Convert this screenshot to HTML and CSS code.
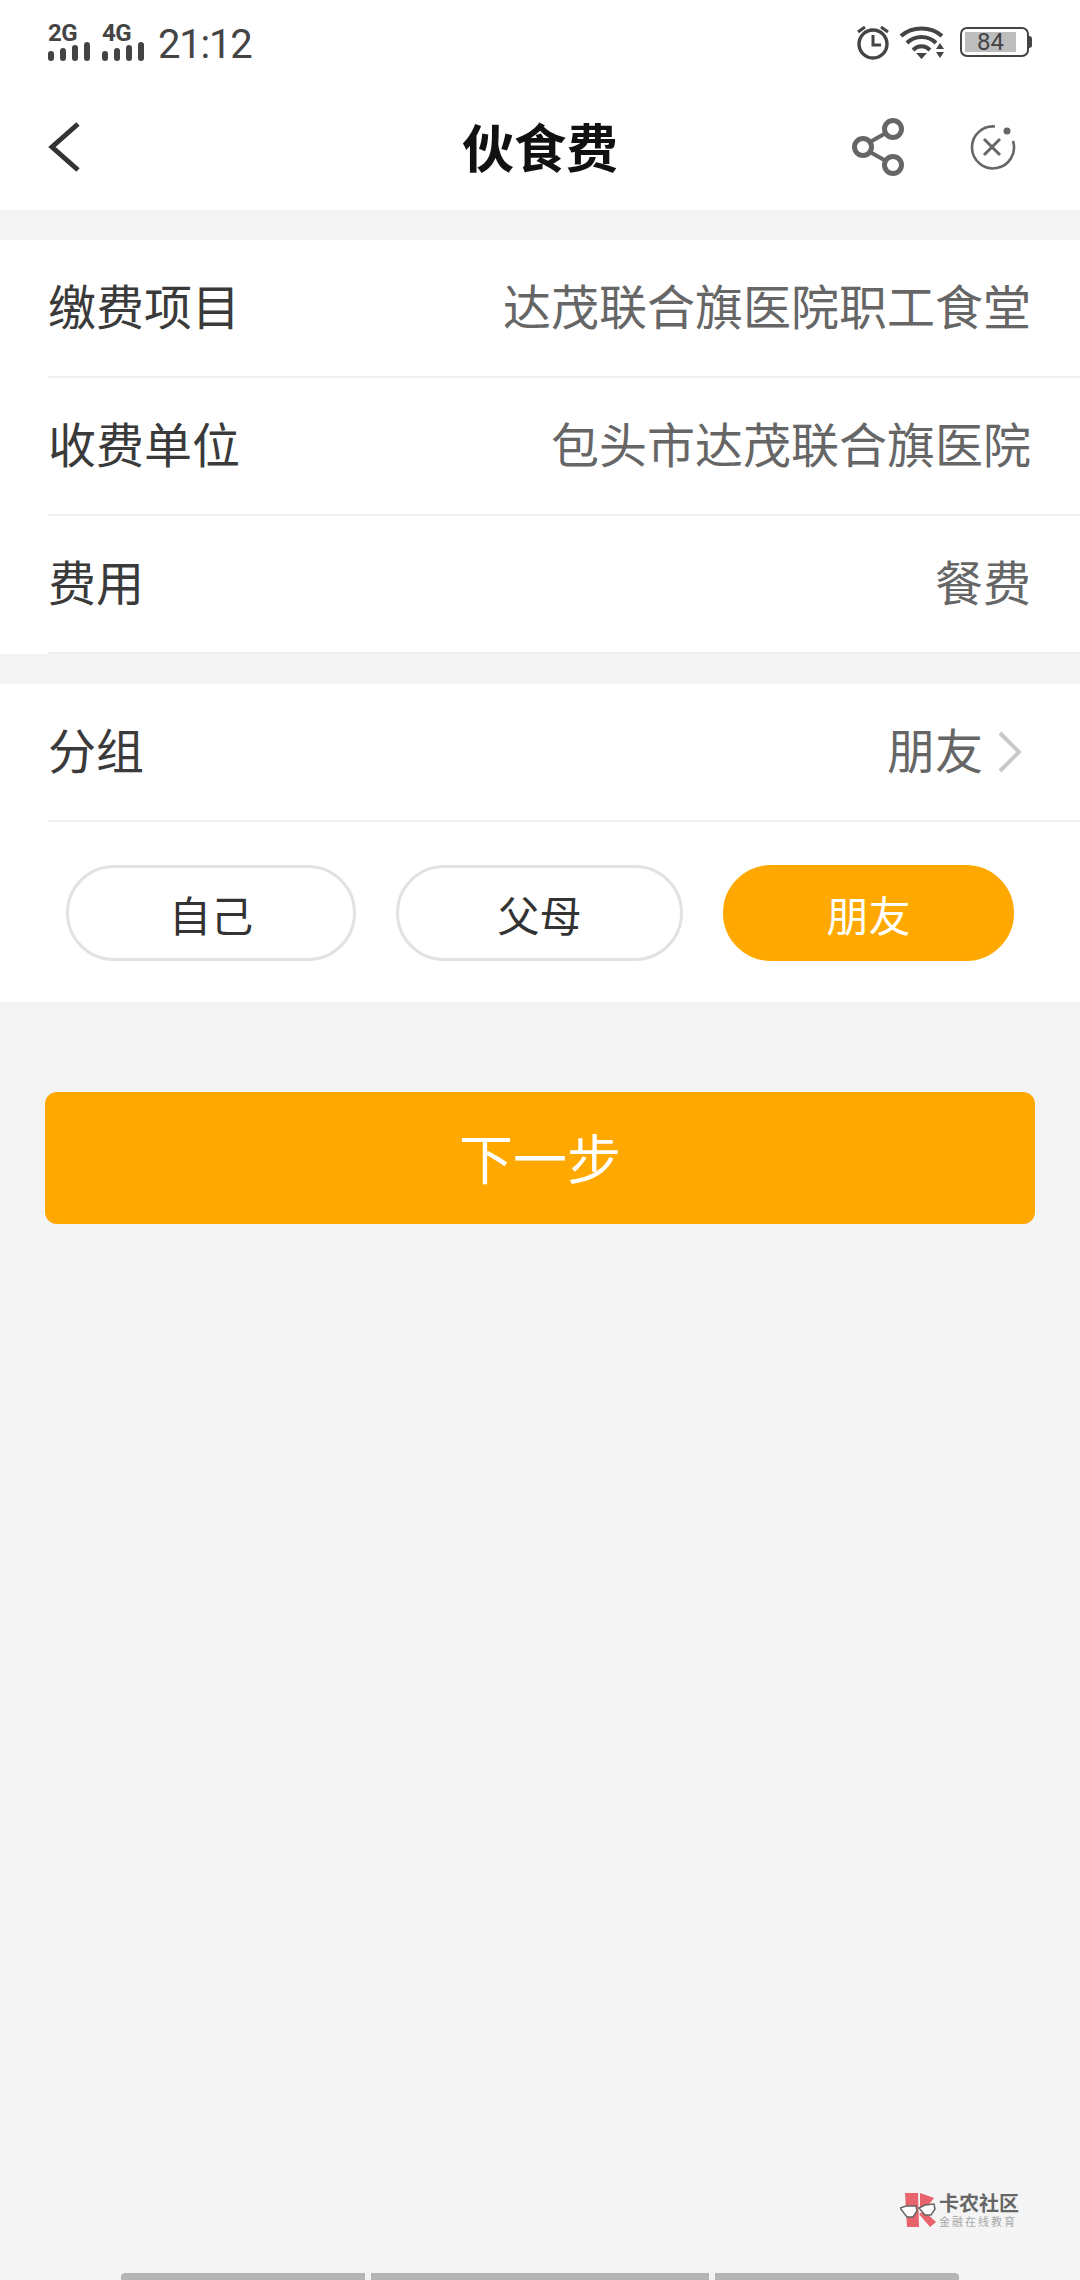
FILE: index.html

```html
<!DOCTYPE html>
<html>
<head>
    <title>伙食费</title>
    <meta charset="utf-8">
    <meta name="viewport" content="width=device-width, initial-scale=1">
    <link rel="stylesheet" href="styles.css">
</head>
<body>
    <div class="status-bar">
        <div class="status-left">
            <div class="signal">
                <span class="signal-name">2G</span>
                <div class="signal-bars"><i class="b1"></i><i class="b2"></i><i class="b3"></i><i class="b4"></i></div>
            </div>
            <div class="signal">
                <span class="signal-name">4G</span>
                <div class="signal-bars"><i class="b1"></i><i class="b2"></i><i class="b3"></i><i class="b4"></i></div>
            </div>
            <span class="clock">21:12</span>
        </div>
        <div class="status-right">
            <svg class="alarm-icon" width="34" height="36" viewBox="0 0 34 36">
                <circle cx="17" cy="20" r="14" fill="none" stroke="#444" stroke-width="3.4"/>
                <path d="M17 11v10h8" fill="none" stroke="#444" stroke-width="3"/>
                <path d="M2 8l7-5M32 8l-7-5" fill="none" stroke="#444" stroke-width="3"/>
            </svg>
            <svg class="wifi-icon" width="48" height="34" viewBox="0 0 48 34">
                <path d="M2 11C13 1 32 1 43 11" fill="none" stroke="#444" stroke-width="4"/>
                <path d="M8 18C16 10 29 10 37 18" fill="none" stroke="#444" stroke-width="4"/>
                <path d="M14 25C19 20 26 20 31 25" fill="none" stroke="#444" stroke-width="4"/>
                <path d="M17 28h11l-5.500 6z" fill="#444"/>
                <path d="M37 24l4-6 4 6zM37 27h8l-4 6z" fill="#444"/>
            </svg>
            <div class="battery">
                <div class="battery-body"><span class="battery-level">84</span></div>
                <div class="battery-tip"></div>
            </div>
        </div>
    </div>

    <div class="nav-bar">
        <svg class="back-icon" width="34" height="50" viewBox="0 0 34 50">
            <path d="M31 2L5 25l26 23" fill="none" stroke="#333" stroke-width="5"/>
        </svg>
        <h1>伙食费</h1>
        <div class="nav-actions">
            <svg width="54" height="60" viewBox="0 0 54 60">
                <circle cx="41" cy="12" r="8.500" fill="none" stroke="#666" stroke-width="5"/>
                <circle cx="11" cy="30" r="8.500" fill="none" stroke="#666" stroke-width="5"/>
                <circle cx="41" cy="48" r="8.500" fill="none" stroke="#666" stroke-width="5"/>
                <path d="M18 25l16-9M18 35l16 9" fill="none" stroke="#666" stroke-width="4"/>
            </svg>
            <svg width="46" height="46" viewBox="0 0 46 46">
                <path d="M25 2.500A21 21 0 1 0 43 17" fill="none" stroke="#666" stroke-width="2.600"/>
                <path d="M14 15l16 16M30 15L14 31" fill="none" stroke="#666" stroke-width="3"/>
                <circle cx="37" cy="7" r="3.500" fill="#666"/>
            </svg>
        </div>
    </div>

    <div class="section">
        <div class="row"><span class="row-label">缴费项目</span><span class="row-value">达茂联合旗医院职工食堂</span></div>
        <div class="row"><span class="row-label">收费单位</span><span class="row-value">包头市达茂联合旗医院</span></div>
        <div class="row"><span class="row-label">费用</span><span class="row-value">餐费</span></div>
    </div>

    <div class="section section-group">
        <div class="row row-group">
            <span class="row-label">分组</span>
            <span class="row-value">朋友</span>
            <svg class="more-icon" width="26" height="42" viewBox="0 0 26 42">
                <path d="M3 2l19 19L3 40" fill="none" stroke="#c8c8c8" stroke-width="4"/>
            </svg>
        </div>
        <div class="chips">
            <div class="chip">自己</div>
            <div class="chip">父母</div>
            <div class="chip chip-active">朋友</div>
        </div>
    </div>

    <button class="next-btn">下一步</button>

    <div class="watermark">
        <svg width="36" height="36" viewBox="0 0 36 36">
            <path d="M5 1h13l1 34H7z" fill="#e8636b"/>
            <path d="M20 1l14 5-10 13-4-3zM19 22l5-3 12 11-6 5z" fill="#e8636b"/>
            <path d="M0 16l6-2h10l1 5-4 6H7z" fill="#fff" stroke="#666" stroke-width="1.500"/>
            <path d="M19 16l6-3 9-1 1 5-4 6h-6z" fill="#fff" stroke="#666" stroke-width="1.500"/>
        </svg>
        <div class="watermark-text">
            <div class="watermark-name">卡农社区</div>
            <div class="watermark-sub">金融在线教育</div>
        </div>
    </div>

    <div class="gesture-bar">
        <div class="gesture-side gesture-left"></div>
        <div class="gesture-mid"></div>
        <div class="gesture-side gesture-right"></div>
    </div>
</body>
</html>
```

FILE: styles.css

```css
* {
    box-sizing: border-box;
}
body {
    font-family: "Noto Sans CJK SC", "Noto Sans", sans-serif;
    margin: 0;
    width: 1080px;
    height: 2280px;
    overflow: hidden;
    position: relative;
    background: #f4f4f4;
    color: #333;
    display: flex;
    flex-direction: column;
}
.status-bar {
    height: 84px;
    background: #fff;
    padding: 0 48px 0 48px;
    display: flex;
    align-items: center;
    justify-content: space-between;
}
.status-left {
    display: flex;
    align-items: center;
}
.signal {
    width: 54px;
    display: flex;
    flex-direction: column;
    font-family: Roboto, sans-serif;
}
.signal-name {
    font-size: 24px;
    font-weight: 700;
    line-height: 18px;
    color: #444;
    letter-spacing: -0.5px;
}
.signal-bars {
    height: 19px;
    display: flex;
    align-items: flex-end;
    gap: 6px;
}
.signal-bars i {
    width: 6px;
    background: #444;
    border-radius: 3px;
}
.b1 { height: 10px; }
.b2 { height: 13px; }
.b3 { height: 16px; }
.b4 { height: 19px; }
.clock {
    font-family: Roboto, sans-serif;
    font-size: 40px;
    letter-spacing: -1.2px;
    color: #444;
    margin: 4px 0 0 2px;
}
.status-right {
    display: flex;
    align-items: center;
}
.alarm-icon {
    margin-right: 9px;
}
.wifi-icon {
    margin-right: 13px;
}
.battery {
    display: flex;
    align-items: center;
}
.battery-body {
    width: 69px;
    height: 30px;
    border: 2px solid #444;
    border-radius: 7px;
    padding: 3px;
}
.battery-level {
    display: block;
    width: 51px;
    height: 20px;
    background: #bdbdbd;
    font-family: Roboto, sans-serif;
    font-size: 24px;
    line-height: 20px;
    text-align: center;
    color: #444;
}
.battery-tip {
    width: 3px;
    height: 12px;
    background: #444;
    border-radius: 0 3px 3px 0;
}
.nav-bar {
    height: 126px;
    background: #fff;
    position: relative;
    display: flex;
    align-items: center;
    justify-content: space-between;
    padding: 0 64px 0 47px;
}
.nav-bar h1 {
    position: absolute;
    left: 0;
    right: 0;
    margin: 0 0 4px;
    text-align: center;
    font-size: 52px;
    font-weight: 700;
    color: #111;
}
.nav-actions {
    display: flex;
    align-items: center;
    gap: 64px;
}
.section {
    background: #fff;
    margin-top: 30px;
}
.section-group {
    height: 318px;
}
.row {
    height: 138px;
    margin-left: 48px;
    padding: 0 49px 8px 0;
    border-bottom: 2px solid #f0f0f0;
    display: flex;
    align-items: center;
    justify-content: space-between;
    font-size: 48px;
}
.row-label {
    color: #3a3a3a;
}
.row-value {
    color: #666;
}
.row-group {
    padding-right: 57px;
}
.row-group .row-label {
    margin-right: auto;
}
.more-icon {
    margin: 8px 0 0 14px;
}
.chips {
    display: grid;
    grid-template-columns: 290px 287px 291px;
    gap: 40px;
    padding: 43px 0 0 66px;
}
.chip {
    height: 96px;
    border: 3px solid #e2e2e2;
    border-radius: 48px;
    font-size: 42px;
    display: flex;
    align-items: center;
    justify-content: center;
    color: #333;
}
.chip-active {
    background: #ffa800;
    border-color: #ffa800;
    color: #fff;
}
.next-btn {
    width: 990px;
    height: 132px;
    margin: 90px 0 0 45px;
    padding: 0 0 4px;
    background: #ffa800;
    border: none;
    border-radius: 12px;
    font-family: inherit;
    font-size: 54px;
    color: #fff;
}
.watermark {
    position: absolute;
    left: 900px;
    top: 2192px;
    display: flex;
    gap: 3px;
}
.watermark-name {
    font-size: 20px;
    font-weight: 700;
    line-height: 22px;
    color: #666;
}
.watermark-sub {
    font-size: 11px;
    line-height: 14px;
    letter-spacing: 2px;
    color: #a8a8a8;
}
.gesture-bar {
    margin-top: auto;
    height: 7px;
    display: flex;
    justify-content: center;
    gap: 6px;
}
.gesture-side {
    width: 244px;
    background: #b5b5b5;
}
.gesture-left {
    border-radius: 4px 0 0 0;
}
.gesture-right {
    border-radius: 0 4px 0 0;
}
.gesture-mid {
    width: 338px;
    background: #b5b5b5;
}
```
